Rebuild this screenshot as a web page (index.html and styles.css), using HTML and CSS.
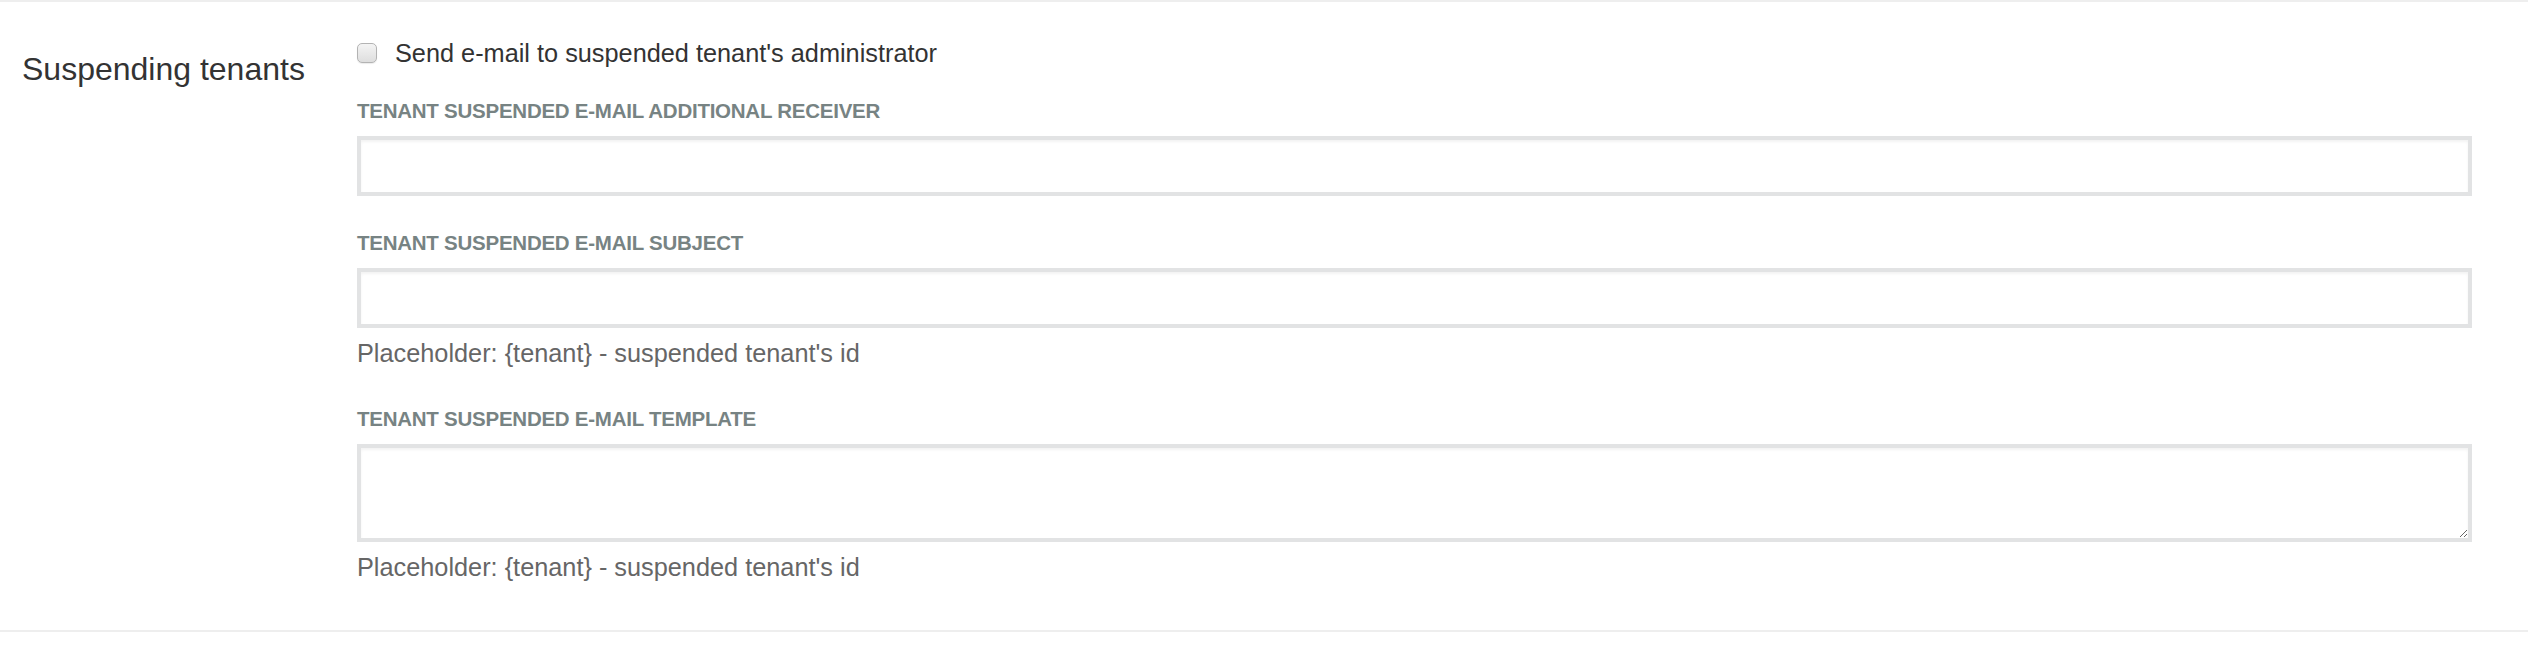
FILE: index.html
```html
<!DOCTYPE html>
<html lang="en">
<head>
<meta charset="utf-8">
<title>Suspending tenants</title>
<link rel="stylesheet" href="styles.css">
</head>
<body>
<section class="settings-row">
  <h3 class="row-title">Suspending tenants</h3>
  <div class="row-body">
    <label class="check-line">
      <input type="checkbox" class="check-box">
      <span class="check-text">Send e-mail to suspended tenant's administrator</span>
    </label>
    <div class="form-group first">
      <label class="field-label">Tenant suspended e-mail additional receiver</label>
      <input type="text" class="field-input">
    </div>
    <div class="form-group">
      <label class="field-label">Tenant suspended e-mail subject</label>
      <input type="text" class="field-input">
      <p class="help-text">Placeholder: {tenant} - suspended tenant's id</p>
    </div>
    <div class="form-group">
      <label class="field-label">Tenant suspended e-mail template</label>
      <textarea class="field-area"></textarea>
      <p class="help-text">Placeholder: {tenant} - suspended tenant's id</p>
    </div>
  </div>
</section>
</body>
</html>
```

FILE: styles.css
```css
html, body {
  margin: 0;
  padding: 0;
  background: #ffffff;
}

body {
  font-family: "Liberation Sans", Arial, sans-serif;
  color: #333333;
  width: 2528px;
  height: 648px;
  overflow: hidden;
}

.settings-row {
  display: grid;
  grid-template-columns: 357px 1fr;
  padding-right: 56px;
  border-top: 2px solid #eeeeee;
  border-bottom: 2px solid #eeeeee;
  height: 632px;
  box-sizing: border-box;
}

.row-title {
  margin: 47px 0 0 0;
  padding-left: 22px;
  font-size: 32px;
  line-height: 40px;
  font-weight: normal;
  color: #333333;
}

.row-body {
  padding-top: 36px;
  display: flex;
  flex-direction: column;
}

.check-line {
  display: flex;
  align-items: center;
  gap: 18px;
  height: 30px;
}

.check-box {
  appearance: none;
  -webkit-appearance: none;
  margin: 0;
  width: 20px;
  height: 20px;
  border: 1px solid #b3b3b3;
  border-radius: 5px;
  background: linear-gradient(#f4f4f4, #dedede);
  box-shadow: 0 1px 1px rgba(0, 0, 0, 0.08);
  box-sizing: border-box;
}

.check-text {
  font-size: 25.3px;
  line-height: 30px;
  color: #333333;
}

.form-group {
  display: flex;
  flex-direction: column;
  margin-top: 35px;
}

.form-group.first {
  margin-top: 31px;
}

.field-label {
  font-size: 20.5px;
  line-height: 24px;
  letter-spacing: -0.25px;
  font-weight: bold;
  text-transform: uppercase;
  color: #778383;
  margin-bottom: 13px;
}

.field-input,
.field-area {
  display: block;
  width: 100%;
  box-sizing: border-box;
  margin: 0;
  border: 4px solid #e2e3e4;
  border-radius: 0;
  background: #ffffff;
  box-shadow: inset 0 2px 3px rgba(0, 0, 0, 0.05);
  font-family: "Liberation Sans", Arial, sans-serif;
  font-size: 25px;
  outline: none;
}

.field-input {
  height: 60px;
}

.field-area {
  height: 98px;
  resize: vertical;
}

.help-text {
  margin: 10px 0 4px 0;
  font-size: 25.3px;
  line-height: 30px;
  color: #666666;
}
```
